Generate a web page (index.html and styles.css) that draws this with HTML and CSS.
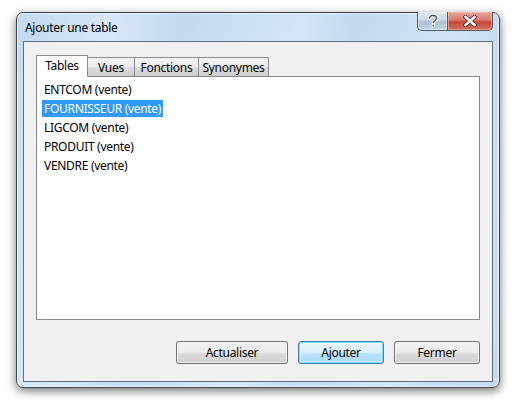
FILE: index.html
```html
<!DOCTYPE html>
<html lang="fr">
<head>
<meta charset="utf-8">
<title>Ajouter une table</title>
<link rel="stylesheet" href="styles.css">
</head>
<body>
<div class="window">
  <div class="titlebar">
    <span class="title">Ajouter une table</span>
    <div class="caption-btns">
      <div class="cbtn help">
        <svg width="12" height="14" viewBox="0 0 12 14"><path d="M2.5 4.5 Q2.5 1.5 6 1.5 Q9.5 1.5 9.5 4.3 Q9.5 6 7.5 7 Q6.2 7.6 6.2 9" fill="none" stroke="#fff" stroke-width="3.2" stroke-linecap="round"/><path d="M2.5 4.5 Q2.5 1.5 6 1.5 Q9.5 1.5 9.5 4.3 Q9.5 6 7.5 7 Q6.2 7.6 6.2 9" fill="none" stroke="#3c4a5c" stroke-width="1.3"/><rect x="5.2" y="10.6" width="2.2" height="2.2" fill="#3c4a5c" stroke="#fff" stroke-width="0.8"/></svg>
      </div>
      <div class="cbtn close">
        <svg width="14" height="12" viewBox="0 0 14 12"><path d="M2.5 2 L11.5 10 M11.5 2 L2.5 10" stroke="#5a2020" stroke-width="4.2" stroke-linecap="square"/><path d="M2.5 2 L11.5 10 M11.5 2 L2.5 10" stroke="#fff" stroke-width="2.6" stroke-linecap="square"/></svg>
      </div>
    </div>
  </div>
  <div class="client">
    <div class="tabs">
      <div class="tab selected t-tables">Tables</div>
      <div class="tab t-vues">Vues</div>
      <div class="tab t-fonctions">Fonctions</div>
      <div class="tab t-syn">Synonymes</div>
    </div>
    <div class="list">
      <div class="item">ENTCOM (vente)</div>
      <div class="item sel">FOURNISSEUR (vente)</div>
      <div class="item">LIGCOM (vente)</div>
      <div class="item">PRODUIT (vente)</div>
      <div class="item">VENDRE (vente)</div>
    </div>
    <div class="buttons">
      <div class="btn b-act">Actualiser</div>
      <div class="btn b-add default">Ajouter</div>
      <div class="btn b-close">Fermer</div>
    </div>
  </div>
</div>
</body>
</html>
```

FILE: styles.css
```css
html, body {
  margin: 0;
  padding: 0;
  background: #ffffff;
}
body {
  width: 518px;
  height: 404px;
  overflow: hidden;
  font-family: "Noto Sans", "Open Sans", sans-serif;
  font-size: 12px;
  letter-spacing: -0.3px;
  color: #000;
}
.window {
  margin: 12px 0 0 16px;
  width: 484px;
  height: 376px;
  box-sizing: border-box;
  border: 1px solid #3b4550;
  border-radius: 7px;
  background:
    linear-gradient(100deg, rgba(255,255,255,0) 0%, rgba(255,255,255,0.35) 18%, rgba(255,255,255,0) 30%, rgba(255,255,255,0.3) 52%, rgba(255,255,255,0) 62%, rgba(255,255,255,0.25) 80%, rgba(255,255,255,0) 92%),
    linear-gradient(180deg, #c2d9f0 0%, #cbe0f4 40%, #c6dcf2 100%);
  box-shadow: 0 3px 10px rgba(0,0,0,0.55), inset 0 0 0 1px rgba(255,255,255,0.55);
  display: flex;
  flex-direction: column;
  padding: 0 6px 5px 6px;
}
.titlebar {
  height: 28px;
  display: flex;
  justify-content: space-between;
  align-items: flex-start;
}
.title {
  margin: 8px 0 0 2px;
  font-size: 12px;
  line-height: 14px;
  color: #000;
}
.caption-btns {
  display: flex;
  margin-top: -1px;
}
.cbtn {
  height: 19px;
  box-sizing: border-box;
  border: 1px solid #4c5866;
  border-top: none;
  display: flex;
  align-items: center;
  justify-content: center;
}
.help {
  width: 30px;
  border-right: none;
  border-bottom-left-radius: 5px;
  background: linear-gradient(180deg, #dde8f3 0%, #c9d8e8 45%, #aebfd3 55%, #c3d4e6 100%);
  box-shadow: inset 0 0 0 1px rgba(255,255,255,0.5);
}
.close {
  width: 46px;
  border-bottom-right-radius: 5px;
  background: linear-gradient(180deg, #e8a89a 0%, #d8786a 45%, #c54a3a 55%, #d0705a 100%);
  box-shadow: inset 0 0 0 1px rgba(255,200,190,0.5);
}
.client {
  flex: 1;
  background: #f0f0f0;
  border: 1px solid #5d6f84;
  padding: 13px 12px 16px 12px;
  display: flex;
  flex-direction: column;
}
.tabs {
  display: flex;
  align-items: flex-end;
  height: 21px;
}
.tab {
  box-sizing: border-box;
  height: 19px;
  border: 1px solid #898c95;
  border-bottom: none;
  background: linear-gradient(180deg, #f3f3f3 0%, #ebebeb 50%, #dddddd 51%, #cfcfcf 100%);
  display: flex;
  align-items: center;
  justify-content: center;
  line-height: 14px;
  padding-top: 2px;
}
.tab + .tab {
  margin-left: -1px;
}
.tab.selected {
  height: 22px;
  background: #ffffff;
  position: relative;
  z-index: 1;
  margin-bottom: -1px;
  padding-top: 0;
  padding-bottom: 2px;
}
.t-tables { width: 52px; }
.t-vues { width: 47px; margin-left: 0 !important; border-left: none; }
.t-fonctions { width: 65px; }
.t-syn { width: 71px; }
.list {
  height: 244px;
  box-sizing: border-box;
  border: 1px solid #828790;
  background: #ffffff;
  padding: 4px 0 0 5px;
  display: flex;
  flex-direction: column;
  align-items: flex-start;
  gap: 2px;
}
.item {
  height: 17px;
  line-height: 17px;
  padding: 0 2px;
  white-space: nowrap;
}
.item.sel {
  background: #3399ff;
  color: #ffffff;
}
.buttons {
  margin-top: 21px;
  display: flex;
  justify-content: flex-end;
  gap: 10px;
}
.btn {
  height: 23px;
  box-sizing: border-box;
  border: 1px solid #707070;
  border-radius: 3px;
  background: linear-gradient(180deg, #f2f2f2 0%, #ebebeb 50%, #dddddd 51%, #cfcfcf 100%);
  box-shadow: inset 0 0 0 1px rgba(255,255,255,0.75);
  display: flex;
  align-items: center;
  justify-content: center;
  line-height: 14px;
}
.b-act { width: 112px; }
.b-add { width: 86px; }
.b-close { width: 86px; }
.btn.default {
  border-color: #3c7fb1;
  background: linear-gradient(180deg, #eaf6fd 0%, #d9f0fc 50%, #bee6fd 51%, #a7d9f5 100%);
  box-shadow: inset 0 0 0 1px #7ddcf8, inset 0 0 0 2px rgba(255,255,255,0.4);
}
```
